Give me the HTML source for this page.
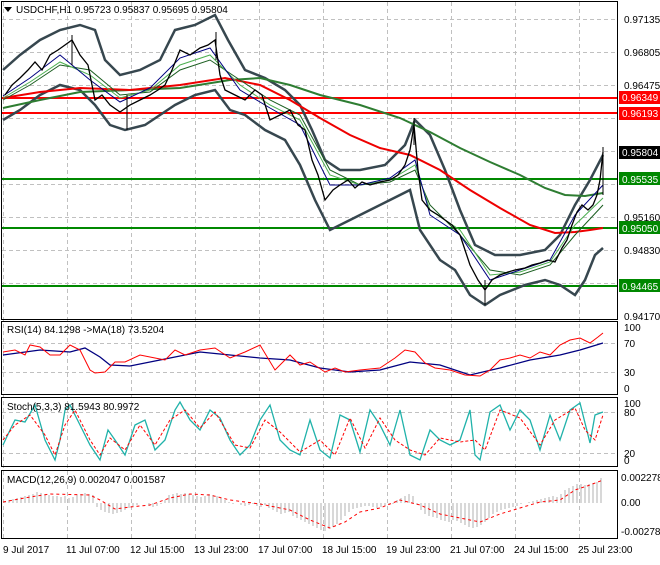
<!DOCTYPE html>
<html><head><style>
body{margin:0;background:#fff;width:660px;height:560px;overflow:hidden;font-family:"Liberation Sans",sans-serif}
svg text{font-family:"Liberation Sans",sans-serif;font-size:10px}
</style></head><body>
<svg width="660" height="560" viewBox="0 0 660 560" xmlns="http://www.w3.org/2000/svg">
<rect width="660" height="560" fill="#fff"/>
<g stroke="#c0c0c0" stroke-dasharray="4,3" stroke-width="1">
<line x1="3.5" y1="2" x2="3.5" y2="539"/><line x1="67.5" y1="2" x2="67.5" y2="539"/><line x1="131.5" y1="2" x2="131.5" y2="539"/><line x1="195.5" y1="2" x2="195.5" y2="539"/><line x1="259.5" y1="2" x2="259.5" y2="539"/><line x1="323.5" y1="2" x2="323.5" y2="539"/><line x1="387.5" y1="2" x2="387.5" y2="539"/><line x1="451.5" y1="2" x2="451.5" y2="539"/><line x1="515.5" y1="2" x2="515.5" y2="539"/><line x1="579.5" y1="2" x2="579.5" y2="539"/>
<line x1="2" y1="19.5" x2="617" y2="19.5"/><line x1="2" y1="52.5" x2="617" y2="52.5"/><line x1="2" y1="85.5" x2="617" y2="85.5"/><line x1="2" y1="118.5" x2="617" y2="118.5"/><line x1="2" y1="151.5" x2="617" y2="151.5"/><line x1="2" y1="184.5" x2="617" y2="184.5"/><line x1="2" y1="217.5" x2="617" y2="217.5"/><line x1="2" y1="250.5" x2="617" y2="250.5"/><line x1="2" y1="283.5" x2="617" y2="283.5"/>
<line x1="2" y1="343.5" x2="617" y2="343.5"/><line x1="2" y1="372.5" x2="617" y2="372.5"/>
<line x1="2" y1="412.5" x2="617" y2="412.5"/><line x1="2" y1="453.5" x2="617" y2="453.5"/>
</g>
<!-- level lines -->
<g stroke-width="2">
<line x1="2" y1="98" x2="617" y2="98" stroke="#f00"/><line x1="2" y1="113" x2="617" y2="113" stroke="#f00"/>
<line x1="2" y1="179" x2="617" y2="179" stroke="#080"/><line x1="2" y1="228" x2="617" y2="228" stroke="#080"/><line x1="2" y1="286" x2="617" y2="286" stroke="#080"/>
</g>
<!-- bollinger -->
<g fill="none" stroke="#37474f" stroke-width="2.5">
<polyline points="3,70 20,55 40,40 60,30 80,25 95,30 105,60 120,75 140,70 160,60 175,30 195,25 215,15 228,40 245,70 265,78 285,90 300,105 312,130 325,160 340,170 360,170 385,165 405,145 415,120 430,135 445,170 460,210 475,245 495,255 520,255 545,250 560,235 575,205 590,180 603,155"/>
<polyline points="3,120 20,110 40,95 60,85 80,90 95,105 110,125 125,130 145,125 160,115 175,105 195,95 215,90 230,110 245,115 265,130 285,140 300,165 315,200 330,230 350,220 370,210 390,200 410,190 420,230 440,260 455,270 470,295 485,305 500,295 525,285 545,280 560,285 575,295 585,280 595,255 603,248"/>
</g>
<!-- MAs -->
<g fill="none" stroke-width="2">
<polyline stroke="#2e7d32" points="3,108 40,100 80,92 130,90 180,88 230,80 260,78 290,85 320,95 360,105 400,118 430,132 460,148 490,162 520,175 545,188 565,195 585,196 603,193"/>
<polyline stroke="#e00" points="3,98 40,92 80,88 130,90 180,85 225,78 260,85 290,100 320,118 350,135 380,148 410,155 440,170 470,190 500,208 530,225 555,233 575,232 590,230 603,228"/>
<polyline stroke="#1b5e20" stroke-width="1" points="3,100 30,85 60,65 90,70 120,95 150,92 180,70 210,60 240,80 270,100 300,115 330,170 360,185 390,182 415,170 430,205 460,235 490,270 520,275 550,265 575,235 603,205"/>
<polyline stroke="#4caf50" stroke-width="1" points="3,98 30,82 60,62 90,75 120,98 150,90 180,65 210,55 240,85 270,105 300,120 330,175 360,185 390,180 415,165 430,210 460,230 490,275 520,272 550,262 575,225 603,198"/>
<polyline stroke="#000080" stroke-width="1" points="3,96 30,78 60,55 90,80 120,102 150,88 180,58 210,48 240,90 270,108 300,125 330,185 360,185 390,178 415,160 430,215 460,235 490,280 520,270 550,260 575,215 603,185"/>
</g>
<!-- price -->
<polyline fill="none" stroke="#000" stroke-width="1.3" points="5,95 12,85 20,78 28,70 35,62 42,70 50,55 58,50 65,45 72,40 80,55 88,65 95,100 102,95 110,105 120,112 130,105 140,100 150,95 158,90 165,85 172,70 180,50 190,55 200,48 208,45 215,40 220,75 225,90 235,95 245,100 255,90 262,95 270,120 280,115 290,110 298,125 305,130 312,160 318,175 325,200 333,190 340,185 348,180 355,188 362,182 370,185 380,182 390,180 398,175 405,165 410,150 414,125 418,170 422,200 430,210 438,215 445,220 452,225 460,235 465,250 470,265 478,280 485,290 492,280 500,275 508,272 515,270 525,268 532,265 540,263 548,260 555,262 562,248 567,240 572,225 577,212 582,205 588,210 593,205 597,195 600,180 603,152"/>
<g stroke="#000"><line x1="603" y1="147" x2="603" y2="195"/><line x1="414" y1="118" x2="414" y2="145"/><line x1="127" y1="95" x2="127" y2="130"/><line x1="72" y1="35" x2="72" y2="65"/><line x1="216" y1="32" x2="216" y2="60"/><line x1="485" y1="280" x2="485" y2="305"/></g>
<!-- RSI -->
<polyline fill="none" stroke="#000080" stroke-width="1.3" points="3,355 40,350 70,352 85,348 100,357 110,365 130,366 160,360 200,352 230,355 260,358 290,360 320,368 350,372 380,370 410,362 440,365 470,375 500,368 530,360 560,355 580,350 603,343"/>
<polyline fill="none" stroke="#f00" stroke-width="1" points="3,352 15,350 25,355 30,345 40,347 50,355 60,355 70,345 80,350 90,370 95,373 105,372 115,362 125,362 140,355 155,358 165,360 175,350 185,355 200,350 215,348 230,358 245,352 260,345 275,370 290,355 300,365 310,362 325,372 335,368 345,372 360,370 380,368 395,358 405,350 415,352 425,363 435,368 450,370 465,375 480,376 490,370 500,360 510,358 520,355 530,358 540,352 550,355 560,345 570,340 580,338 590,343 598,337 603,333"/>
<!-- Stoch -->
<polyline fill="none" stroke="#20b2aa" stroke-width="1.3" points="3,445 10,430 15,420 25,422 35,405 45,440 55,460 60,440 65,410 70,405 80,425 90,445 100,460 108,430 115,440 125,455 135,425 145,420 155,450 165,440 175,410 180,402 190,420 200,430 210,410 220,418 230,440 240,455 250,445 260,420 270,405 280,440 290,450 300,455 310,420 320,450 330,458 340,415 350,420 360,452 370,410 380,425 390,445 400,410 410,455 420,460 430,430 440,440 450,445 460,440 470,410 475,455 480,460 490,412 500,405 510,430 520,410 530,420 540,450 550,415 560,440 570,410 580,403 590,443 595,415 603,412"/>
<polyline fill="none" stroke="#f00" stroke-width="1" stroke-dasharray="3,2" points="3,440 15,425 30,415 45,435 55,455 65,425 75,410 90,440 100,455 110,438 125,450 140,425 155,445 170,420 185,410 200,428 215,412 235,445 250,448 265,420 280,432 300,452 320,440 335,455 350,418 365,448 380,418 395,440 410,450 425,455 440,438 460,442 475,440 485,450 500,410 520,418 540,445 555,420 575,408 585,430 595,440 603,415"/>
<!-- MACD -->
<g stroke="#b0b0b0" stroke-width="1">
<path d="M5 503V501M9 503V500M13 503V499M17 503V498M21 503V497M25 503V496M29 503V495M33 503V494M37 503V492M41 503V493M45 503V494M49 503V495M53 503V496M57 503V496M61 503V497M65 503V496M69 503V498M73 503V497M77 503V495M81 503V494M85 503V493M89 503V494M93 503V495M97 503V507M101 503V510M105 503V512M109 503V513M113 503V514M117 503V513M121 503V512M125 503V510M129 503V508M133 503V506M137 503V505M141 503V503M145 503V503M149 503V506M153 503V507M157 503V506M161 503V504M165 503V500M169 503V495M173 503V494M177 503V493M181 503V494M185 503V493M189 503V494M193 503V495M197 503V496M201 503V497M205 503V496M209 503V494M213 503V495M217 503V496M221 503V498M225 503V500M229 503V502M233 503V504M237 503V503M241 503V505M245 503V506M249 503V505M253 503V504M257 503V506M261 503V507M265 503V505M269 503V508M273 503V510M277 503V512M281 503V514M285 503V513M289 503V512M293 503V516M297 503V518M301 503V520M305 503V522M309 503V524M313 503V526M317 503V528M321 503V530M325 503V531M329 503V529M333 503V527M337 503V524M341 503V520M345 503V516M349 503V512M353 503V509M357 503V508M361 503V507M365 503V506M369 503V506M373 503V507M377 503V508M381 503V507M385 503V506M389 503V505M393 503V504M397 503V500M401 503V498M405 503V496M409 503V494M413 503V496M417 503V505M421 503V510M425 503V514M429 503V516M433 503V517M437 503V518M441 503V520M445 503V521M449 503V522M453 503V520M457 503V521M461 503V523M465 503V525M469 503V527M473 503V528M477 503V527M481 503V525M485 503V522M489 503V518M493 503V514M497 503V512M501 503V510M505 503V509M509 503V508M513 503V507M517 503V506M521 503V504M525 503V503M529 503V502M533 503V501M537 503V500M541 503V499M545 503V498M549 503V497M553 503V496M557 503V497M561 503V494M565 503V490M569 503V488M573 503V486M577 503V484M581 503V484M585 503V485M589 503V484M593 503V483M597 503V482M601 503V478"/>
</g>
<polyline fill="none" stroke="#f00" stroke-width="1" stroke-dasharray="3,3" points="3,502 30,497 50,494 90,495 100,500 115,509 130,507 150,505 170,498 190,494 210,495 230,500 260,504 290,510 310,520 330,528 345,522 360,512 380,508 400,500 420,505 440,514 460,518 480,522 500,514 520,508 540,502 560,500 575,490 590,485 603,480"/>
<!-- frame -->
<g fill="none" stroke="#000" stroke-width="1">
<rect x="1.5" y="1.5" width="616" height="318"/>
<rect x="1.5" y="321.5" width="616" height="73"/>
<rect x="1.5" y="397.5" width="616" height="69"/>
<rect x="1.5" y="470.5" width="616" height="68"/>
</g>
<!-- headers -->
<polygon points="4,7 12,7 8,12" fill="#000"/>
<text x="16" y="13" fill="#000">USDCHF,H1  0.95723 0.95837 0.95695 0.95804</text>
<text x="7" y="333">RSI(14) 84.1298  -&gt;MA(18) 73.5204</text>
<text x="7" y="410">Stoch(5,3,3) 81.5943 80.9972</text>
<text x="7" y="483">MACD(12,26,9) 0.002047 0.001587</text>
<!-- right axis -->
<g fill="#000">
<text x="624" y="23">0.97135</text><text x="624" y="56">0.96805</text><text x="624" y="89">0.96475</text>
<text x="624" y="221">0.95160</text><text x="624" y="254">0.94830</text><text x="624" y="320">0.94170</text>
<text x="624" y="331">100</text><text x="624" y="347">70</text><text x="624" y="376">30</text><text x="624" y="392">0</text>
<text x="624" y="407">100</text><text x="624" y="416">80</text><text x="624" y="457">20</text><text x="624" y="464">0</text>
<text x="621" y="481">0.002278</text><text x="621" y="506">0.00</text><text x="621" y="535">-0.002785</text>
</g>
<rect x="619" y="91" width="41" height="13" fill="#f00"/><text x="622" y="101" fill="#fff">0.96349</text>
<rect x="619" y="107" width="41" height="13" fill="#f00"/><text x="622" y="117" fill="#fff">0.96193</text>
<rect x="619" y="146" width="41" height="13" fill="#000"/><text x="622" y="156" fill="#fff">0.95804</text>
<rect x="619" y="172" width="41" height="13" fill="#080"/><text x="622" y="183" fill="#fff">0.95535</text>
<rect x="619" y="221" width="41" height="13" fill="#080"/><text x="622" y="232" fill="#fff">0.95050</text>
<rect x="619" y="279" width="41" height="13" fill="#080"/><text x="622" y="290" fill="#fff">0.94465</text>
<!-- bottom axis -->
<g fill="#000">
<text x="3" y="553">9 Jul 2017</text><text x="66" y="553">11 Jul 07:00</text><text x="130" y="553">12 Jul 15:00</text><text x="194" y="553">13 Jul 23:00</text><text x="258" y="553">17 Jul 07:00</text><text x="322" y="553">18 Jul 15:00</text><text x="386" y="553">19 Jul 23:00</text><text x="450" y="553">21 Jul 07:00</text><text x="514" y="553">24 Jul 15:00</text><text x="578" y="553">25 Jul 23:00</text>
</g>
</svg>
</body></html>
